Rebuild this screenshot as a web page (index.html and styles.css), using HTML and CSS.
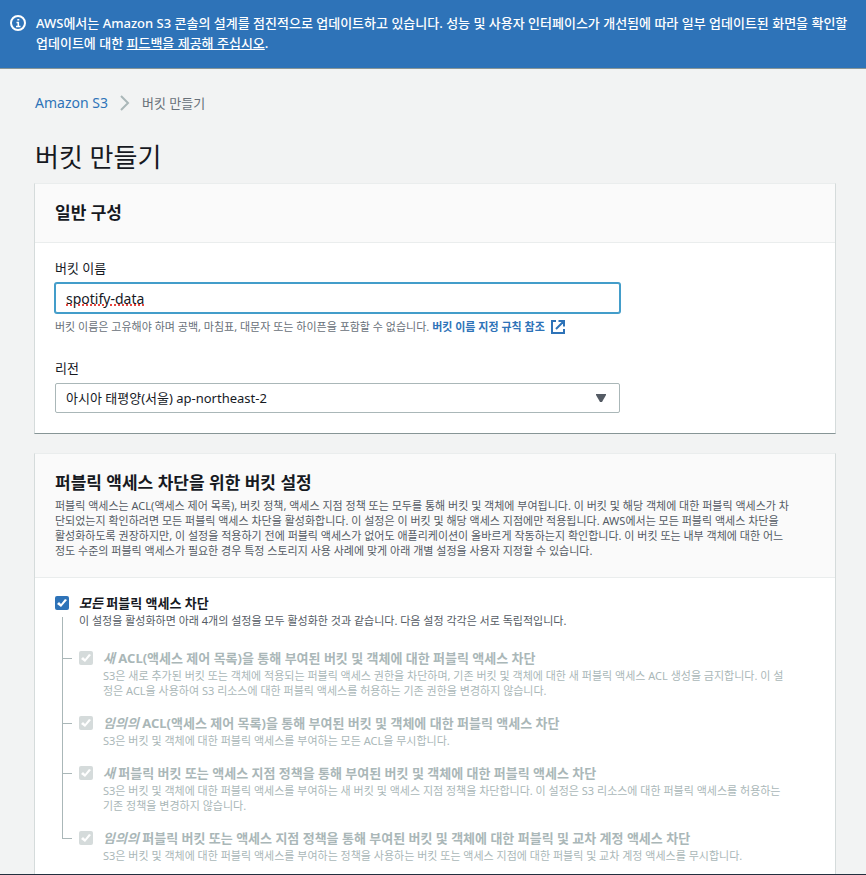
FILE: index.html
```
<!DOCTYPE html>
<html lang="ko">
<head>
<meta charset="UTF-8">
<meta name="viewport" content="width=device-width, initial-scale=1">
<title>버킷 만들기</title>
<link rel="stylesheet" href="styles.css">
</head>
<body>
    <div class="flash">
        <svg class="flash-icon" width="16" height="16" viewBox="0 0 16 16" fill="none" stroke="#fff">
            <circle cx="8" cy="8" r="7" stroke-width="2"/>
            <path d="M6 11.500h4.500M6.500 7.500h1.800v4M7.300 4.800h2" stroke-width="1.600"/>
        </svg>
        <p class="flash-text">AWS에서는 Amazon S3 콘솔의 설계를 점진적으로 업데이트하고 있습니다. 성능 및 사용자 인터페이스가 개선됨에 따라 일부 업데이트된 화면을 확인할<br>업데이트에 대한 <a href="#">피드백을 제공해 주십시오</a>.</p>
    </div>

    <main class="content">
        <nav class="breadcrumb">
            <a href="#">Amazon S3</a>
            <svg width="10" height="16" viewBox="0 0 10 16" fill="none" stroke="#aab7b8" stroke-width="2"><path d="M1 1l7 7-7 7"/></svg>
            <span>버킷 만들기</span>
        </nav>
        <h1 class="title">버킷 만들기</h1>

        <section class="card">
            <header class="card-header">
                <h2>일반 구성</h2>
            </header>
            <div class="card-body">
                <div class="field">
                    <label for="bucket">버킷 이름</label>
                    <input type="text" id="bucket" class="control focused" value="spotify-data" spellcheck="false">
                    <p class="hint">버킷 이름은 고유해야 하며 공백, 마침표, 대문자 또는 하이픈을 포함할 수 없습니다. <a href="#">버킷 이름 지정 규칙 참조
                        <svg width="14" height="14" viewBox="0 0 14 14" fill="none" stroke="#2e73b8" stroke-width="2"><path d="M5 1H1v12h12V9M7.500 1H13v5.500M13 1L5 9"/></svg></a></p>
                </div>
                <div class="field">
                    <label for="region">리전</label>
                    <div class="select">
                        <select id="region" class="control">
                            <option>아시아 태평양(서울) ap-northeast-2</option>
                        </select>
                        <svg class="arrow" width="10" height="8" viewBox="0 0 10 8"><path d="M0 0h10v1L6 8H4L0 1z" fill="#545b64"/></svg>
                    </div>
                </div>
            </div>
        </section>

        <section class="card">
            <header class="card-header">
                <h2>퍼블릭 액세스 차단을 위한 버킷 설정</h2>
                <p>퍼블릭 액세스는 ACL(액세스 제어 목록), 버킷 정책, 액세스 지점 정책 또는 모두를 통해 버킷 및 객체에 부여됩니다. 이 버킷 및 해당 객체에 대한 퍼블릭 액세스가 차<br>단되었는지 확인하려면 모든 퍼블릭 액세스 차단을 활성화합니다. 이 설정은 이 버킷 및 해당 액세스 지점에만 적용됩니다. AWS에서는 모든 퍼블릭 액세스 차단을<br>활성화하도록 권장하지만, 이 설정을 적용하기 전에 퍼블릭 액세스가 없어도 애플리케이션이 올바르게 작동하는지 확인합니다. 이 버킷 또는 내부 객체에 대한 어느<br>정도 수준의 퍼블릭 액세스가 필요한 경우 특정 스토리지 사용 사례에 맞게 아래 개별 설정을 사용자 지정할 수 있습니다.</p>
            </header>
            <div class="card-body access">
                <div class="access-all">
                    <div class="stem"><input type="checkbox" id="all" checked></div>
                    <div>
                        <label for="all"><em>모든</em> 퍼블릭 액세스 차단</label>
                        <p>이 설정을 활성화하면 아래 4개의 설정을 모두 활성화한 것과 같습니다. 다음 설정 각각은 서로 독립적입니다.</p>
                    </div>
                </div>
                <ul class="access-list">
                    <li>
                        <input type="checkbox" id="new-acl" checked disabled>
                        <div>
                            <label for="new-acl"><em>새</em> ACL(액세스 제어 목록)을 통해 부여된 버킷 및 객체에 대한 퍼블릭 액세스 차단</label>
                            <p>S3은 새로 추가된 버킷 또는 객체에 적용되는 퍼블릭 액세스 권한을 차단하며, 기존 버킷 및 객체에 대한 새 퍼블릭 액세스 ACL 생성을 금지합니다. 이 설<br>정은 ACL을 사용하여 S3 리소스에 대한 퍼블릭 액세스를 허용하는 기존 권한을 변경하지 않습니다.</p>
                        </div>
                    </li>
                    <li>
                        <input type="checkbox" id="any-acl" checked disabled>
                        <div>
                            <label for="any-acl"><em>임의의</em> ACL(액세스 제어 목록)을 통해 부여된 버킷 및 객체에 대한 퍼블릭 액세스 차단</label>
                            <p>S3은 버킷 및 객체에 대한 퍼블릭 액세스를 부여하는 모든 ACL을 무시합니다.</p>
                        </div>
                    </li>
                    <li>
                        <input type="checkbox" id="new-policy" checked disabled>
                        <div>
                            <label for="new-policy"><em>새</em> 퍼블릭 버킷 또는 액세스 지점 정책을 통해 부여된 버킷 및 객체에 대한 퍼블릭 액세스 차단</label>
                            <p>S3은 버킷 및 객체에 대한 퍼블릭 액세스를 부여하는 새 버킷 및 액세스 지점 정책을 차단합니다. 이 설정은 S3 리소스에 대한 퍼블릭 액세스를 허용하는<br>기존 정책을 변경하지 않습니다.</p>
                        </div>
                    </li>
                    <li>
                        <input type="checkbox" id="any-policy" checked disabled>
                        <div>
                            <label for="any-policy"><em>임의의</em> 퍼블릭 버킷 또는 액세스 지점 정책을 통해 부여된 버킷 및 객체에 대한 퍼블릭 및 교차 계정 액세스 차단</label>
                            <p>S3은 버킷 및 객체에 대한 퍼블릭 액세스를 부여하는 정책을 사용하는 버킷 또는 액세스 지점에 대한 퍼블릭 및 교차 계정 액세스를 무시합니다.</p>
                        </div>
                    </li>
                </ul>
            </div>
        </section>
    </main>
    <footer class="footer"></footer>
</body>
</html>
```
FILE: styles.css
```
* {
    margin: 0;
    padding: 0;
    box-sizing: border-box;
}
body {
    display: flex;
    flex-direction: column;
    height: 100vh;
    overflow: hidden;
    background: #f2f3f3;
    color: #16191f;
    font: 13px/20px "Noto Sans", "Noto Sans CJK KR", sans-serif;
}
a {
    color: #2e73b8;
    text-decoration: none;
}
.flash {
    display: flex;
    flex: none;
    gap: 10px;
    padding: 13px 0 15px 10px;
    border-bottom: 1px solid #879596;
    background: #2e73b8;
    color: #fff;
    font-weight: 500;
    overflow: hidden;
}
.flash-icon {
    flex: none;
    margin-top: 2px;
}
.flash-text {
    white-space: nowrap;
}
.flash a {
    color: #fff;
    text-decoration: underline;
}
.content {
    flex: 1;
    min-height: 0;
    padding: 24px 30px 0 34px;
    overflow: hidden;
}
.breadcrumb {
    display: flex;
    align-items: center;
    gap: 12px;
    padding-left: 1px;
    color: #687078;
}
.breadcrumb a {
    font-size: 14px;
}
.title {
    margin: 25px 0 7px;
    padding-left: 1px;
    font-size: 26px;
    line-height: 38px;
    font-weight: 400;
}

/* cards */
.card {
    margin-bottom: 19px;
    border: 1px solid #d5dbdb;
    border-top-color: #eaeded;
    border-bottom-color: #879596;
    background: #fff;
}
.card-header {
    padding: 19px 20px;
    border-bottom: 1px solid #eaeded;
    background: #fafafa;
}
.card-header h2 {
    font-size: 17px;
    line-height: 20px;
    font-weight: 700;
}
.card-header p {
    margin-top: 5px;
    color: #545b64;
    font-size: 11px;
    line-height: 15px;
    white-space: nowrap;
}
.card-body {
    padding: 15px 20px 20px;
}

/* form */
.field + .field {
    margin-top: 24px;
}
.field label {
    display: block;
    margin-bottom: 5px;
}
.control {
    display: block;
    width: 100%;
    height: 30px;
    padding: 0 10px;
    border: 1px solid #aab7b8;
    border-radius: 2px;
    background: #fff;
    color: #16191f;
    font: inherit;
    appearance: none;
}
input.control,
.select {
    width: 75%;
    max-width: 565px;
}
input.control {
    font-size: 14px;
}
.focused {
    border-color: #439dca;
    box-shadow: 0 0 0 1px #439dca;
    outline: none;
    text-decoration: underline dotted #e8473f 2px;
}
.select {
    position: relative;
}
.arrow {
    position: absolute;
    top: 11px;
    right: 14px;
    pointer-events: none;
}
.hint {
    margin-top: 6px;
    color: #687078;
    font-size: 11px;
    line-height: 15px;
}
.hint a {
    font-weight: 700;
}
.hint svg {
    margin-left: 3px;
    vertical-align: -3px;
}

/* public access */
.access input {
    flex: none;
    width: 14px;
    height: 14px;
    margin-top: 3px;
    border-radius: 2px;
    background: #2e73b8;
    appearance: none;
}
.access input::before {
    content: "";
    display: block;
    height: 14px;
    background: #fff;
    clip-path: polygon(2px 8px, 4px 6px, 6px 8px, 10px 3px, 12px 4px, 6px 11px);
}
.access input:disabled {
    background: #d5dbdb;
}
.access label {
    display: block;
    font-weight: 700;
}
.access p {
    color: #545b64;
    font-size: 11px;
    line-height: 15px;
    white-space: nowrap;
}
.access-all {
    display: flex;
    gap: 10px;
}
.access-all p {
    margin-bottom: 20px;
}
.stem {
    display: flex;
    flex-direction: column;
    gap: 7px;
}
.stem::after {
    content: "";
    flex: 1;
    margin-left: 7px;
    border-left: 1px solid #aab7b8;
}
.access-list {
    padding-left: 7px;
    list-style: none;
}
.access-list li {
    display: flex;
    gap: 10px;
    padding-bottom: 15px;
    color: #aab7b8;
}
.access-list .access-list p,
.access-list p {
    color: #aab7b8;
}
/* branch from the stem to the checkbox */
.access-list li::before {
    content: "";
    width: 10px;
    margin-right: -3px;
    margin-bottom: -15px;
    background: linear-gradient(#aab7b8, #aab7b8) 0 0 / 1px 100% no-repeat, linear-gradient(#aab7b8, #aab7b8) 0 10px / 100% 1px no-repeat;
}
.access-list li:last-child::before {
    height: 11px;
}
.footer {
    flex: none;
    height: 1px;
    background: #232f3e;
}
```
